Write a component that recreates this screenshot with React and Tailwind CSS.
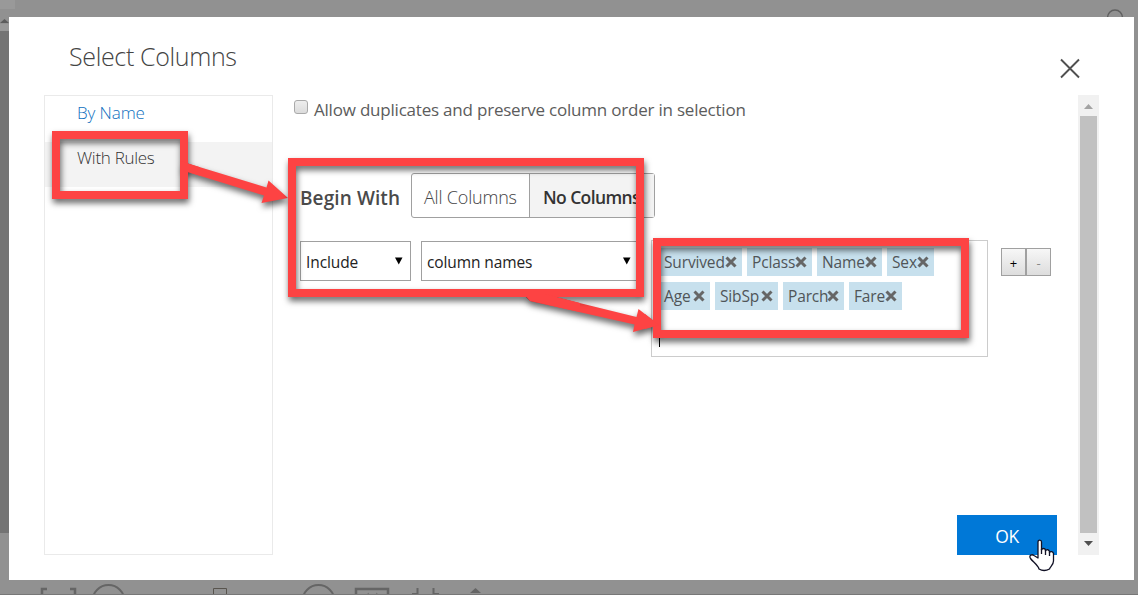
import React from "react";

const TAG_ROWS = [
  [
    { name: "Survived", box: "w-[83px]" },
    { name: "Pclass", box: "w-[65px]" },
    { name: "Name", box: "w-[65px]" },
    { name: "Sex", box: "w-[47px]" },
  ],
  [
    { name: "Age", box: "w-[51px]" },
    { name: "SibSp", box: "w-[63px]" },
    { name: "Parch", box: "w-[61px]" },
    { name: "Fare", box: "w-[53px]" },
  ],
];

function Tag({ name, box }) {
  return (
    <span className={`flex h-7 shrink-0 items-center justify-between bg-[#c7e0ed] pr-[5px] pl-[5px] text-[15.5px] tracking-[-0.15px] whitespace-nowrap text-[#505558] ${box}`}>
      <span className="pt-[2px]">{name}</span>
      <svg className="-ml-1 shrink-0" width="12" height="12" viewBox="0 0 12 12">
        <path d="M1.500 1.500L10.500 10.500M10.500 1.500L1.500 10.500" stroke="#666" strokeWidth="3" />
      </svg>
    </span>
  );
}

function Select({ label, className }) {
  return (
    <div className={`flex h-10 items-center justify-between border border-[#a0a0a0] pt-[3px] pl-[5px] text-[15.5px] text-[#222] ${className}`}>
      <span>{label}</span>
      <svg className="-mt-[3px]" width="8" height="8" viewBox="0 0 8 8">
        <path d="M0 0.500H7.500L3.750 7.500Z" fill="#000" />
      </svg>
    </div>
  );
}

function Backdrop() {
  return (
    <svg className="absolute inset-0" width="1138" height="595" viewBox="0 0 1138 595" fill="none">
      <rect width="15" height="9" fill="#999" />
      <rect y="24" width="9" height="509" fill="#747474" />
      <rect y="24" width="9" height="7" fill="#999" />
      <path d="M0 23L4.500 19L9 23Z" fill="#5c5c5c" />
      <circle cx="1115" cy="17.500" r="7.500" stroke="#606060" strokeWidth="1.500" />
      <g stroke="#656565" strokeWidth="2">
        <path d="M42 595V589H47M70 589H75V595" strokeWidth="2.500" />
        <circle cx="108.500" cy="601" r="16" />
        <path d="M213.500 595V588.500H226.500V595" strokeWidth="1" stroke="#58544e" />
        <circle cx="318.500" cy="601" r="16" />
        <path d="M356 595V589H388V595" strokeWidth="2.500" />
        <path d="M367 594.500L369 593M376 593L378 594.500" strokeWidth="0.700" />
        <path d="M417.500 588V595M412 594H418M433.500 588V595M433 594H439" />
        <path d="M470 593L475.500 588L481 593Z" fill="#656565" stroke="none" />
      </g>
      <path d="M0 594.500H1138" stroke="#777" />
    </svg>
  );
}

function Annotations() {
  return (
    <div className="pointer-events-none absolute inset-0">
      <svg className="absolute inset-0 drop-shadow-[1px_4px_3px_rgba(0,0,0,0.6)]" width="1138" height="595" viewBox="0 0 1138 595">
        <path d="M183 162L266.500 187.500L268.500 180.500L288 198L261.500 203L264 195.500L181 170Z" fill="#fd4343" />
        <path d="M524 295H547L636.500 317L638.500 309L659 325L633 332L634.500 324.500L530 301Z" fill="#fd4343" />
      </svg>
      <svg className="absolute inset-0 drop-shadow-[1px_4px_3px_rgba(0,0,0,0.6)]" width="1138" height="595" viewBox="0 0 1138 595" fill="none" stroke="#fd4343" strokeWidth="8">
        <rect x="56" y="135" width="128" height="60" />
        <rect x="292" y="162" width="348" height="131" />
        <rect x="657" y="242" width="308" height="92" />
      </svg>
      <svg className="absolute inset-0" width="1138" height="595" viewBox="0 0 1138 595">
        <path d="M180 161.100L200 167.200V175.800L180 169.700Z" fill="#fd4343" />
        <path d="M524 294H545L580 303V312L530 301Z" fill="#fd4343" />
        <path d="M645 314L659 325L645 329Z" fill="#fd4343" />
      </svg>
    </div>
  );
}

export default function App() {
  return (
    <div className="relative h-[595px] w-[1138px] overflow-hidden bg-[#919191] pt-[17px] pl-[9px] font-['Open_Sans',sans-serif]">
      <Backdrop />
      <main className="relative flex h-[563px] w-[1125px] flex-col bg-white pl-[35px]">
        <header className="flex h-[78px] shrink-0 items-start justify-between pr-[54px] pl-[25px]">
          <h1 className="mt-[20px] text-[25px] leading-[38px] font-light tracking-[-0.35px] text-[#444]">Select Columns</h1>
          <svg className="mt-[41px]" width="20" height="21" viewBox="0 0 20 21">
            <path d="M1 1.500L19 19.500M19 1.500L1 19.500" stroke="#505050" strokeWidth="1.900" />
          </svg>
        </header>
        <section className="flex h-[460px]">
          <nav className="h-[460px] w-[229px] shrink-0 border border-[#eaeaea] text-[17px] leading-[34px] font-light">
            <div className="h-[46px] pl-8 tracking-[-0.1px] text-[#1070c0]">By Name</div>
            <div className="h-[45px] bg-[#f3f3f3] pl-8 leading-[32px] tracking-[-0.3px] text-[#333]">With Rules</div>
          </nav>
          <div className="flex w-[805px] shrink-0 flex-col">
            <label className="flex h-[78px] items-start pl-[21px] text-[17px] leading-[30px] text-[#5c5c5c]">
              <span className="mt-[5px] mr-[6px] h-[14px] w-[14px] rounded-[3px] border border-[#aaa] bg-gradient-to-b from-[#eee] to-[#dcdcdc]" />
              <span className="tracking-[-0.21px]">Allow duplicates and preserve column order in selection</span>
            </label>
            <div className="flex h-[45px] items-center pl-[27px]">
              <span className="w-[111px] pt-[6px] text-[19px] font-semibold tracking-[0.1px] whitespace-nowrap text-[#4a4a4a]">Begin With</span>
              <div className="flex h-[45px] w-[244px] rounded-[3px] border border-[#a0a0a0] text-[18px] leading-[47px] whitespace-nowrap">
                <span className="w-[118px] border-r border-[#a0a0a0] pl-3 font-light tracking-[-0.2px] text-[#444]">All Columns</span>
                <span className="grow bg-[#f3f3f3] pl-[13px] text-[17.5px] font-semibold tracking-[-0.6px] text-[#333]">No Columns</span>
              </div>
            </div>
            <div className="mt-[22px] flex items-start pl-[27px]">
              <Select label="Include" className="mt-px w-[111px] pr-[7px] tracking-[-0.1px]" />
              <Select label="column names" className="mt-px ml-[10px] w-[220px] pr-[9px] tracking-[-0.1px]" />
              <div className="ml-[10px] flex h-[117px] w-[337px] flex-col gap-[6px] border border-[#ccc] pt-[7px] pl-[7px]">
                {TAG_ROWS.map((row, i) => (
                  <div key={i} className="flex gap-[5px]">
                    {row.map((tag) => (
                      <Tag key={tag.name} {...tag} />
                    ))}
                  </div>
                ))}
                <span className="mt-[19px] h-3 w-px bg-black" />
              </div>
              <div className="mt-2 ml-[13px] flex text-[13px] leading-[28px]">
                <button className="h-7 w-[25px] border border-[#a0a0a0] bg-gradient-to-b from-[#f7f7f7] to-[#ddd] text-black">+</button>
                <button className="h-7 w-[25px] border border-[#a0a0a0] bg-gradient-to-b from-[#f7f7f7] to-[#ddd] text-[#888]">-</button>
              </div>
            </div>
            <button className="mt-auto ml-[684px] h-10 w-[100px] bg-[#0078d7] pt-[3px] text-[17.5px] tracking-[-0.4px] text-white">OK</button>
          </div>
          <div className="flex w-[21px] flex-col items-center bg-[#f1f1f1]">
            <svg width="21" height="21" viewBox="0 0 21 21"><path d="M6 14L10.500 9L15 14Z" fill="#a3a3a3" /></svg>
            <div className="h-[417px] w-[17px] bg-[#c1c1c1]" />
            <svg width="21" height="22" viewBox="0 0 21 22"><path d="M6 8H15L10.500 13Z" fill="#505050" /></svg>
          </div>
        </section>
      </main>
      <Annotations />
      <svg className="absolute top-[539px] left-[1029px]" width="26" height="33" viewBox="0 0 26 33">
        <path d="M9 17V3C9 .5 12.500 .5 12.500 3V11C13 9 16 9 16.500 11V12C17.500 10 20 10.500 20.500 12.500V13.500C21.500 12 24 12.500 24.500 14.500V22C24.500 26 21 28 20.500 30Q15 33 10 30C9 26 4 23 1.500 19.500C-.5 16 3 15 5 16.500L9 19Z" fill="#fff" stroke="#111125" strokeWidth="1.300" strokeLinejoin="round" />
        <path d="M12.500 10V15M16.500 11V16M20.500 13V17" stroke="#111125" strokeWidth="1.300" />
      </svg>
    </div>
  );
}
